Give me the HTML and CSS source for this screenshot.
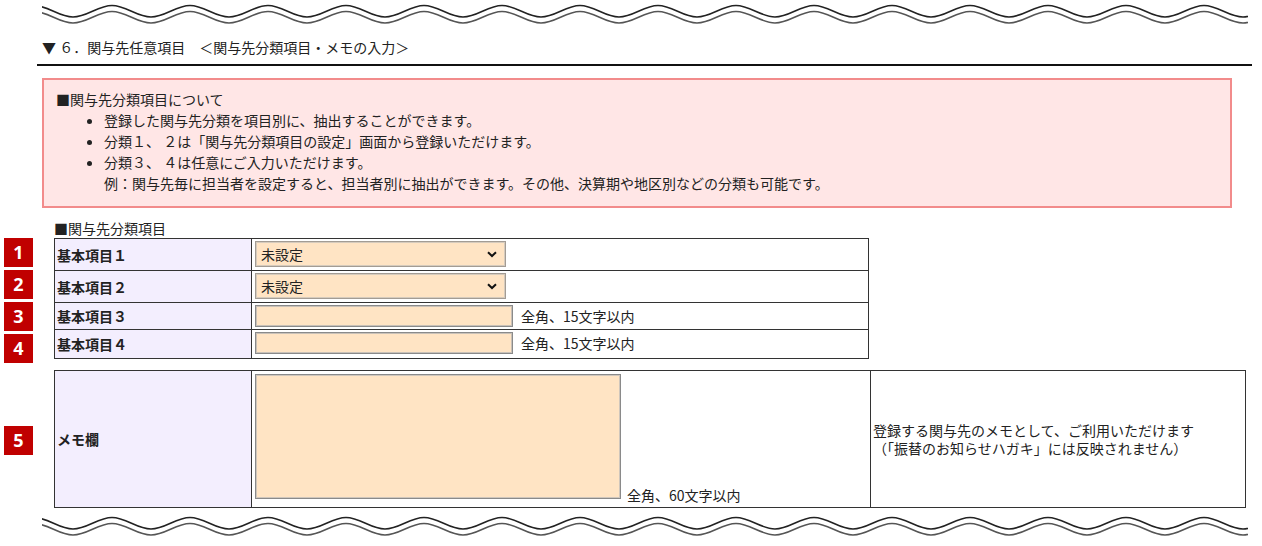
FILE: index.html
```html
<!DOCTYPE html>
<html lang="ja">
<head>
	<meta charset="utf-8">
	<title>関与先任意項目</title>
	<link rel="stylesheet" href="styles.css">
</head>
<body>
	<div class="wave">
		<svg width="1206" height="26" viewBox="0 0 1206 26">
			<path class="wave-a" d="M-8,5.5 c14,0 25,11.5 39,11.5 s25,-11.5 39,-11.5 c14,0 25,11.5 39,11.5 s25,-11.5 39,-11.5 c14,0 25,11.5 39,11.5 s25,-11.5 39,-11.5 c14,0 25,11.5 39,11.5 s25,-11.5 39,-11.5 c14,0 25,11.5 39,11.5 s25,-11.5 39,-11.5 c14,0 25,11.5 39,11.5 s25,-11.5 39,-11.5 c14,0 25,11.5 39,11.5 s25,-11.5 39,-11.5 c14,0 25,11.5 39,11.5 s25,-11.5 39,-11.5 c14,0 25,11.5 39,11.5 s25,-11.5 39,-11.5 c14,0 25,11.5 39,11.5 s25,-11.5 39,-11.5 c14,0 25,11.5 39,11.5 s25,-11.5 39,-11.5 c14,0 25,11.5 39,11.5 s25,-11.5 39,-11.5 c14,0 25,11.5 39,11.5 s25,-11.5 39,-11.5 c14,0 25,11.5 39,11.5 s25,-11.5 39,-11.5 c14,0 25,11.5 39,11.5 s25,-11.5 39,-11.5 c14,0 25,11.5 39,11.5 s25,-11.5 39,-11.5"/>
			<path class="wave-b" d="M-8,11.5 c14,0 25,11.5 39,11.5 s25,-11.5 39,-11.5 c14,0 25,11.5 39,11.5 s25,-11.5 39,-11.5 c14,0 25,11.5 39,11.5 s25,-11.5 39,-11.5 c14,0 25,11.5 39,11.5 s25,-11.5 39,-11.5 c14,0 25,11.5 39,11.5 s25,-11.5 39,-11.5 c14,0 25,11.5 39,11.5 s25,-11.5 39,-11.5 c14,0 25,11.5 39,11.5 s25,-11.5 39,-11.5 c14,0 25,11.5 39,11.5 s25,-11.5 39,-11.5 c14,0 25,11.5 39,11.5 s25,-11.5 39,-11.5 c14,0 25,11.5 39,11.5 s25,-11.5 39,-11.5 c14,0 25,11.5 39,11.5 s25,-11.5 39,-11.5 c14,0 25,11.5 39,11.5 s25,-11.5 39,-11.5 c14,0 25,11.5 39,11.5 s25,-11.5 39,-11.5 c14,0 25,11.5 39,11.5 s25,-11.5 39,-11.5 c14,0 25,11.5 39,11.5 s25,-11.5 39,-11.5 c14,0 25,11.5 39,11.5 s25,-11.5 39,-11.5"/>
		</svg>
	</div>

	<h2 class="secTitle">▼ ６．関与先任意項目　＜関与先分類項目・メモの入力＞</h2>

	<div class="note">
		<p>■関与先分類項目について</p>
		<ul>
			<li>登録した関与先分類を項目別に、抽出することができます。</li>
			<li>分類１、 ２は「関与先分類項目の設定」画面から登録いただけます。</li>
			<li>分類３、 ４は任意にご入力いただけます。<br>例：関与先毎に担当者を設定すると、担当者別に抽出ができます。その他、決算期や地区別などの分類も可能です。</li>
		</ul>
	</div>

	<p class="subLabel">■関与先分類項目</p>

	<div class="formRow">
		<div class="badges">
			<span class="badge">1</span>
			<span class="badge">2</span>
			<span class="badge">3</span>
			<span class="badge">4</span>
		</div>
		<table class="formTable">
			<tr>
				<th>基本項目１</th>
				<td>
					<div class="field">
						<div class="selWrap">
							<select><option>未設定</option></select>
							<svg class="chev" width="10" height="7" viewBox="0 0 10 7"><path d="M1,1.2 L5,5 L9,1.2"/></svg>
						</div>
					</div>
				</td>
			</tr>
			<tr>
				<th>基本項目２</th>
				<td>
					<div class="field">
						<div class="selWrap">
							<select><option>未設定</option></select>
							<svg class="chev" width="10" height="7" viewBox="0 0 10 7"><path d="M1,1.2 L5,5 L9,1.2"/></svg>
						</div>
					</div>
				</td>
			</tr>
			<tr class="textRow">
				<th>基本項目３</th>
				<td><div class="field"><input type="text"><span>全角、15文字以内</span></div></td>
			</tr>
			<tr class="lastRow">
				<th>基本項目４</th>
				<td><div class="field"><input type="text"><span>全角、15文字以内</span></div></td>
			</tr>
		</table>
	</div>

	<div class="formRow memoRow">
		<div class="badges">
			<span class="badge">5</span>
		</div>
		<table class="formTable memoTable">
			<tr>
				<th>メモ欄</th>
				<td class="memoCell">
					<div class="field bottom"><textarea></textarea><span>全角、60文字以内</span></div>
				</td>
				<td class="memoNote">登録する関与先のメモとして、ご利用いただけます<br>（「振替のお知らせハガキ」には反映されません）</td>
			</tr>
		</table>
	</div>

	<div class="wave waveBottom">
		<svg width="1206" height="26" viewBox="0 0 1206 26">
			<path class="wave-a" d="M-8,5.5 c14,0 25,11.5 39,11.5 s25,-11.5 39,-11.5 c14,0 25,11.5 39,11.5 s25,-11.5 39,-11.5 c14,0 25,11.5 39,11.5 s25,-11.5 39,-11.5 c14,0 25,11.5 39,11.5 s25,-11.5 39,-11.5 c14,0 25,11.5 39,11.5 s25,-11.5 39,-11.5 c14,0 25,11.5 39,11.5 s25,-11.5 39,-11.5 c14,0 25,11.5 39,11.5 s25,-11.5 39,-11.5 c14,0 25,11.5 39,11.5 s25,-11.5 39,-11.5 c14,0 25,11.5 39,11.5 s25,-11.5 39,-11.5 c14,0 25,11.5 39,11.5 s25,-11.5 39,-11.5 c14,0 25,11.5 39,11.5 s25,-11.5 39,-11.5 c14,0 25,11.5 39,11.5 s25,-11.5 39,-11.5 c14,0 25,11.5 39,11.5 s25,-11.5 39,-11.5 c14,0 25,11.5 39,11.5 s25,-11.5 39,-11.5 c14,0 25,11.5 39,11.5 s25,-11.5 39,-11.5 c14,0 25,11.5 39,11.5 s25,-11.5 39,-11.5"/>
			<path class="wave-b" d="M-8,11.5 c14,0 25,11.5 39,11.5 s25,-11.5 39,-11.5 c14,0 25,11.5 39,11.5 s25,-11.5 39,-11.5 c14,0 25,11.5 39,11.5 s25,-11.5 39,-11.5 c14,0 25,11.5 39,11.5 s25,-11.5 39,-11.5 c14,0 25,11.5 39,11.5 s25,-11.5 39,-11.5 c14,0 25,11.5 39,11.5 s25,-11.5 39,-11.5 c14,0 25,11.5 39,11.5 s25,-11.5 39,-11.5 c14,0 25,11.5 39,11.5 s25,-11.5 39,-11.5 c14,0 25,11.5 39,11.5 s25,-11.5 39,-11.5 c14,0 25,11.5 39,11.5 s25,-11.5 39,-11.5 c14,0 25,11.5 39,11.5 s25,-11.5 39,-11.5 c14,0 25,11.5 39,11.5 s25,-11.5 39,-11.5 c14,0 25,11.5 39,11.5 s25,-11.5 39,-11.5 c14,0 25,11.5 39,11.5 s25,-11.5 39,-11.5 c14,0 25,11.5 39,11.5 s25,-11.5 39,-11.5 c14,0 25,11.5 39,11.5 s25,-11.5 39,-11.5"/>
		</svg>
	</div>
</body>
</html>
```

FILE: styles.css
```css
*{
	margin: 0;
	padding: 0;
}
body{
	font: 14px/20px "Noto Sans CJK JP", "Noto Sans", sans-serif;
	color: #222;
	background: #fff;
}
.wave{
	width: 1206px;
	height: 26px;
	margin-left: 42px;
}
.wave svg{
	display: block;
}
.wave path{
	fill: none;
	stroke-width: 1.6;
}
.wave .wave-a{
	stroke: #222;
}
.wave .wave-b{
	stroke: #555;
}
.waveBottom{
	margin-top: 4px;
}
.secTitle{
	width: 1210px;
	margin: 11px 0 0 37px;
	padding: 0 0 7px 5px;
	border-bottom: 2px solid #111;
	font-size: 14px;
	font-weight: normal;
	line-height: 20px;
}
.note{
	box-sizing: border-box;
	width: 1190px;
	margin: 12px 0 0 42px;
	padding: 9px 12px 12px;
	border: 2px solid #f28b8b;
	background: #ffe6e6;
	line-height: 21px;
}
.note ul{
	padding-left: 48px;
	list-style: disc;
}
.subLabel{
	margin: 10px 0 0 54px;
	line-height: 20px;
}
.formRow{
	display: flex;
	align-items: flex-start;
	gap: 21px;
	margin-left: 4px;
}
.memoRow{
	align-items: center;
	margin-top: 7px;
}
.badges{
	display: flex;
	flex-direction: column;
	gap: 3px;
	width: 29px;
}
.badge{
	display: block;
	width: 29px;
	height: 29px;
	background: #c00000;
	color: #fff;
	font: 700 18px/29px "Open Sans", "Liberation Sans", sans-serif;
	text-align: center;
}
.memoRow .badge{
	margin-top: 3px;
}
.formTable{
	width: 815px;
	table-layout: fixed;
	border-collapse: collapse;
}
.formTable th,
.formTable td{
	border: 1px solid #333;
}
.formTable th{
	width: 192px;
	padding: 0 2px;
	background: #f3eefe;
	font-weight: bold;
	text-align: left;
	vertical-align: middle;
}
.formTable td{
	padding: 2px 3px 3px;
}
.formTable .textRow td{
	padding-bottom: 2px;
}
.formTable .lastRow td{
	padding-bottom: 4px;
}
.field{
	display: flex;
	align-items: center;
	gap: 8px;
}
.selWrap{
	position: relative;
	width: 251px;
	height: 26px;
}
select,
input,
textarea{
	box-sizing: border-box;
	font: 14px/20px "Noto Sans CJK JP", sans-serif;
	color: #222;
	background: #ffe4c4;
	outline: none;
}
select{
	-webkit-appearance: none;
	appearance: none;
	display: block;
	width: 251px;
	height: 26px;
	padding: 0 20px 0 5px;
	border: 1px solid #a39c94;
	box-shadow: inset 0 0 0 1px #d6cbbd;
	border-radius: 0;
}
.chev{
	position: absolute;
	top: 10px;
	right: 9px;
	pointer-events: none;
}
.chev path{
	fill: none;
	stroke: #111;
	stroke-width: 2;
}
input{
	width: 258px;
	height: 22px;
	padding: 0 4px;
	border: 1px solid #8a8a8a;
	box-shadow: inset 0 0 0 1px #c9c1b8;
}
.memoTable{
	width: 1192px;
}
.memoCell{
	width: 612px;
}
.formTable td.memoCell{
	padding: 3px 3px 8px;
}
.field.bottom{
	align-items: flex-end;
	gap: 6px;
}
.field.bottom span{
	line-height: 18px;
	margin-bottom: -5px;
}
textarea{
	display: block;
	width: 366px;
	height: 125px;
	border: 1px solid #8a8a8a;
	box-shadow: inset 0 0 0 1px #cfc6bc;
	resize: none;
}
.formTable td.memoNote{
	padding: 0 2px;
	line-height: 18px;
	vertical-align: middle;
}
```
